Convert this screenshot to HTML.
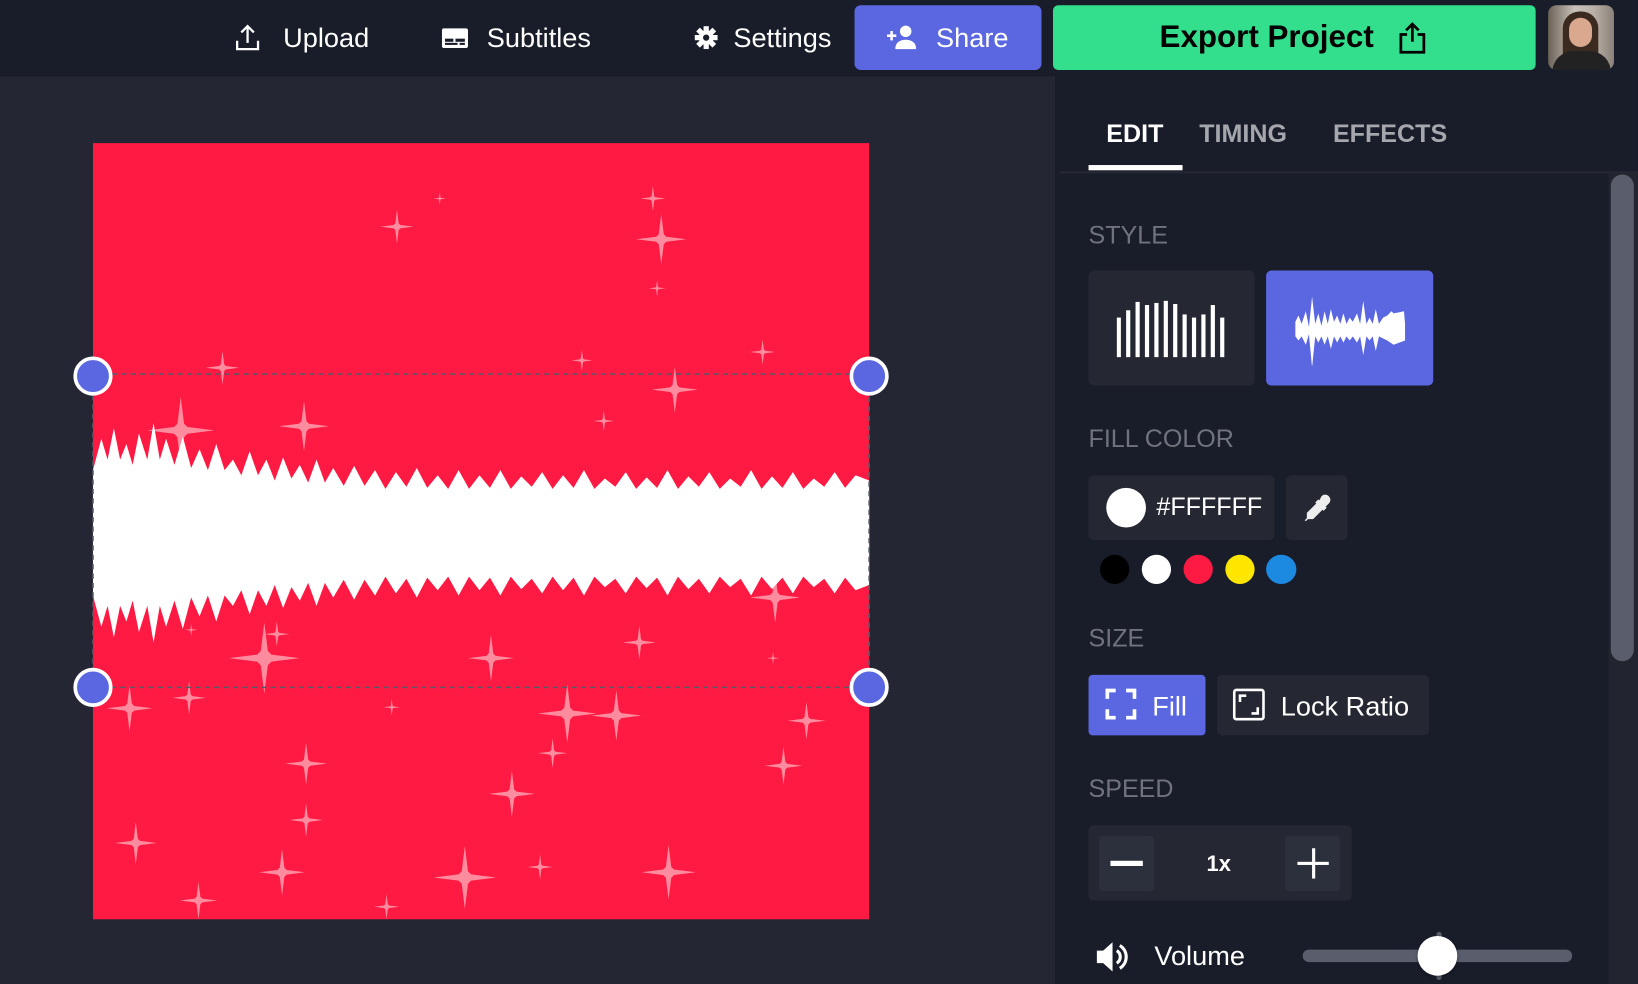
<!DOCTYPE html>
<html><head><meta charset="utf-8"><style>
html,body{margin:0;padding:0;width:1638px;height:984px;overflow:hidden;background:#191d2a;}
#w{position:absolute;left:0;top:0;width:1568px;height:942px;transform:scale(1.04464);transform-origin:0 0;font-family:"Liberation Sans",sans-serif;color:#fff;}
.a{position:absolute;}
.nav{font-size:26px;color:#fff;top:21px;}
.lbl{font-size:24px;color:#70737e;}
.box{background:#252733;border-radius:5px;}
</style></head><body><div id="w">
<div class="a" style="left:0;top:0;width:1568px;height:73px;background:#191d2a"></div>
<div class="a" style="left:0;top:73px;width:1010px;height:869px;background:#242633"></div>
<div class="a" style="left:1010px;top:73px;width:558px;height:869px;background:#191d2a"></div>

<!-- nav -->
<svg class="a" style="left:224px;top:22px" width="26" height="28" viewBox="0 0 26 28" fill="none" stroke="#fff" stroke-width="2.2"><path d="M13 19V3M7 9l6-6 6 6M3 17v8h20v-8"/></svg>
<div class="a nav" style="left:271px">Upload</div>
<svg class="a" style="left:423px;top:27px" width="25" height="19" viewBox="0 0 25 19"><rect x="0" y="0" width="25" height="19" rx="2" fill="#fff"/><rect x="3" y="10" width="8" height="3" fill="#191d2a"/><rect x="13" y="10" width="9" height="3" fill="#191d2a"/><rect x="3" y="14" width="12" height="2" fill="#191d2a"/><rect x="17" y="14" width="5" height="2" fill="#191d2a"/></svg>
<div class="a nav" style="left:466px">Subtitles</div>
<svg class="a" style="left:665px;top:25px" width="22" height="22" viewBox="-11 -11 22 22"><g fill="#fff"><circle r="7"/><rect x="-2.5" y="-11" width="5" height="22"/><rect x="-2.5" y="-11" width="5" height="22" transform="rotate(45)"/><rect x="-2.5" y="-11" width="5" height="22" transform="rotate(90)"/><rect x="-2.5" y="-11" width="5" height="22" transform="rotate(135)"/></g><circle r="3" fill="#191d2a"/></svg>
<div class="a nav" style="left:702px">Settings</div>
<div class="a" style="left:818px;top:5px;width:179px;height:62px;background:#5b67e1;border-radius:6px"></div>
<svg class="a" style="left:849px;top:24px" width="30" height="24" viewBox="0 0 30 24" fill="#fff"><circle cx="18" cy="6" r="5.5"/><path d="M8 23c0-6 4-9 10-9s10 3 10 9z"/><rect x="0" y="9" width="9" height="2.4"/><rect x="3.3" y="5.7" width="2.4" height="9"/></svg>
<div class="a nav" style="left:896px">Share</div>
<div class="a" style="left:1008px;top:5px;width:462px;height:62px;background:#33df8c;border-radius:5px"></div>
<div class="a" style="left:1110px;top:19px;font-size:30px;font-weight:bold;color:#000">Export Project</div>
<svg class="a" style="left:1338px;top:20px" width="28" height="32" viewBox="0 0 28 32" fill="none" stroke="#000" stroke-width="2.6"><path d="M14 20V3M8 9l6-6 6 6M9 13H3v17h22V13h-6"/></svg>
<div class="a" style="left:1482px;top:5px;width:63px;height:62px;border-radius:8px;background:linear-gradient(90deg,#6b6258,#c9c2b8 40%,#b8b0a6 70%,#8a8178);overflow:hidden">
<div class="a" style="left:14px;top:6px;width:34px;height:60px;border-radius:16px 16px 4px 4px;background:#3b2a20"></div>
<div class="a" style="left:20px;top:12px;width:22px;height:28px;border-radius:11px;background:#d9a88e"></div>
<div class="a" style="left:4px;top:44px;width:56px;height:30px;border-radius:20px 20px 0 0;background:#222"></div>
</div>

<!-- canvas -->
<svg class="a" style="left:0;top:0" width="1010" height="942">
<defs><path id="st" d="M0,-1 L0.1,-0.2 L0.2,-0.1 L1,0 L0.2,0.1 L0.1,0.2 L0,1 L-0.1,0.2 L-0.2,0.1 L-1,0 L-0.2,-0.1 L-0.1,-0.2Z" fill="#ff8c9e"/>
<polygon id="wv" fill="#fff" points="89,450 97,420 103,440 109,410 115,440 121,425 127,445 133,415 141,440 147,405 153,440 159,420 167,445 175,418 183,448 191,430 199,450 207,425 215,450 223,440 231,455 239,432 247,455 255,440 263,460 271,438 279,458 287,445 295,462 303,440 311,462 319,448 329,465 339,446 349,465 359,450 369,468 379,452 389,466 399,448 409,467 419,455 429,468 439,450 449,468 459,455 469,467 479,450 489,468 499,456 509,466 519,452 529,468 539,455 549,467 559,450 569,468 579,458 589,466 599,452 609,468 619,457 629,467 639,450 649,468 659,456 669,466 679,452 689,468 699,458 709,466 719,450 729,468 739,456 749,467 759,452 769,468 779,458 789,466 799,452 809,467 819,455 832,460 832,512 89,512"/></defs>
<rect x="89" y="137" width="743" height="743" fill="#ff1a44"/>
<g>
<use href="#st" transform="translate(380,217) scale(16)"/><use href="#st" transform="translate(633,229) scale(24)"/><use href="#st" transform="translate(625,190) scale(12)"/><use href="#st" transform="translate(629,276) scale(8)"/><use href="#st" transform="translate(421,190) scale(6)"/><use href="#st" transform="translate(213,352) scale(16)"/><use href="#st" transform="translate(173,412) scale(32)"/><use href="#st" transform="translate(291,408) scale(24)"/><use href="#st" transform="translate(646,373) scale(22)"/><use href="#st" transform="translate(557,345) scale(10)"/><use href="#st" transform="translate(730,337) scale(12)"/><use href="#st" transform="translate(578,403) scale(10)"/><use href="#st" transform="translate(253,630) scale(34)"/><use href="#st" transform="translate(265,607) scale(12)"/><use href="#st" transform="translate(470,630) scale(22)"/><use href="#st" transform="translate(543,683) scale(28)"/><use href="#st" transform="translate(590,685) scale(24)"/><use href="#st" transform="translate(490,760) scale(22)"/><use href="#st" transform="translate(293,731) scale(20)"/><use href="#st" transform="translate(293,785) scale(16)"/><use href="#st" transform="translate(130,807) scale(20)"/><use href="#st" transform="translate(270,835) scale(22)"/><use href="#st" transform="translate(445,840) scale(30)"/><use href="#st" transform="translate(640,835) scale(26)"/><use href="#st" transform="translate(517,830) scale(12)"/><use href="#st" transform="translate(190,862) scale(18)"/><use href="#st" transform="translate(370,868) scale(12)"/><use href="#st" transform="translate(772,690) scale(18)"/><use href="#st" transform="translate(750,733) scale(18)"/><use href="#st" transform="translate(742,572) scale(24)"/><use href="#st" transform="translate(612,615) scale(16)"/><use href="#st" transform="translate(124,678) scale(22)"/><use href="#st" transform="translate(181,668) scale(16)"/><use href="#st" transform="translate(529,721) scale(14)"/><use href="#st" transform="translate(183,603) scale(6)"/><use href="#st" transform="translate(375,677) scale(8)"/><use href="#st" transform="translate(740,630) scale(6)"/>
</g>
<use href="#wv"/><use href="#wv" transform="translate(0,1020) scale(1,-1)"/>
<rect x="89" y="470" width="743" height="80" fill="#fff"/>
<rect x="89" y="358" width="743" height="300" fill="none" stroke="#555a66" stroke-width="1.5" stroke-dasharray="5,4"/>
<g fill="#5b67e1" stroke="#fff" stroke-width="3.5"><circle cx="89" cy="360" r="17"/><circle cx="832" cy="360" r="17"/><circle cx="89" cy="658" r="17"/><circle cx="832" cy="658" r="17"/></g>
</svg>

<!-- panel -->
<div class="a" style="left:1059px;top:115px;font-size:24px;font-weight:bold;color:#fff">EDIT</div>
<div class="a" style="left:1148px;top:115px;font-size:24px;font-weight:bold;color:#a5a7ad">TIMING</div>
<div class="a" style="left:1276px;top:115px;font-size:24px;font-weight:bold;color:#a5a7ad">EFFECTS</div>
<div class="a" style="left:1042px;top:158px;width:90px;height:5px;background:#fff"></div>
<div class="a" style="left:1014px;top:164px;width:554px;height:2px;background:#252733"></div>
<div class="a" style="left:1540px;top:166px;width:28px;height:776px;background:#22252f"></div>
<div class="a" style="left:1542px;top:167px;width:22px;height:466px;background:#5a5d6b;border-radius:11px"></div>

<div class="a lbl" style="left:1042px;top:212px">STYLE</div>
<div class="a box" style="left:1042px;top:259px;width:159px;height:110px"></div>
<svg class="a" style="left:1069px;top:286px" width="108" height="56" fill="#fff"><rect x="0" y="18" width="4" height="38"/><rect x="9" y="11" width="4" height="45"/><rect x="18" y="3" width="4" height="53"/><rect x="27" y="6" width="4" height="50"/><rect x="36" y="4" width="4" height="52"/><rect x="45" y="2" width="4" height="54"/><rect x="54" y="5" width="4" height="51"/><rect x="63" y="15" width="4" height="41"/><rect x="72" y="18" width="4" height="38"/><rect x="81" y="15" width="4" height="41"/><rect x="90" y="6" width="4" height="50"/><rect x="99" y="18" width="4" height="38"/></svg>
<div class="a" style="left:1212px;top:259px;width:160px;height:110px;background:#5b67e1;border-radius:5px"></div>
<svg class="a" style="left:1238px;top:280px" width="110" height="70" fill="#fff"><polygon points="2,28 5,22 8,30 12,18 15,33 18,4 21,30 24,20 27,32 30,18 33,30 36,16 39,28 42,22 45,30 48,20 51,30 54,24 57,28 61,20 64,30 67,8 70,30 73,24 76,30 79,16 82,30 86,24 90,22 94,18 96,20 106,18 107,30 107,46 96,50 90,46 86,44 82,42 79,56 76,42 73,46 70,42 67,60 64,42 61,48 57,42 54,46 51,42 48,48 45,42 42,48 39,42 36,54 33,42 30,50 27,42 24,48 21,42 18,72 15,40 12,50 8,42 5,46 2,42"/></svg>

<div class="a lbl" style="left:1042px;top:407px">FILL COLOR</div>
<div class="a box" style="left:1042px;top:455px;width:178px;height:62px"></div>
<div class="a" style="left:1059px;top:467px;width:38px;height:38px;border-radius:50%;background:#fff"></div>
<div class="a" style="left:1107px;top:472px;font-size:24px">#FFFFFF</div>
<div class="a box" style="left:1231px;top:455px;width:59px;height:62px"></div>
<svg class="a" style="left:1247px;top:472px" width="28" height="28" viewBox="0 0 28 28" fill="#eee"><path d="M18 3c2-2 5-2 7 0s2 5 0 7l-3 3 1 1-3 3-1-1-9 9H5l-2 2-1-1 2-2v-5l9-9-1-1 3-3 1 1z"/></svg>
<div class="a" style="left:1053px;top:531px;width:28px;height:28px;border-radius:50%;background:#000"></div>
<div class="a" style="left:1093px;top:531px;width:28px;height:28px;border-radius:50%;background:#fff"></div>
<div class="a" style="left:1133px;top:531px;width:28px;height:28px;border-radius:50%;background:#ff1a44"></div>
<div class="a" style="left:1173px;top:531px;width:28px;height:28px;border-radius:50%;background:#ffe600"></div>
<div class="a" style="left:1212px;top:531px;width:29px;height:28px;border-radius:50%;background:#1d8ae2"></div>

<div class="a lbl" style="left:1042px;top:598px">SIZE</div>
<div class="a" style="left:1042px;top:646px;width:112px;height:58px;background:#5b67e1;border-radius:4px"></div>
<svg class="a" style="left:1058px;top:659px" width="30" height="30" fill="none" stroke="#fff" stroke-width="3.5"><path d="M2 10V2h8M20 2h8v8M28 20v8h-8M10 28H2v-8"/></svg>
<div class="a" style="left:1103px;top:661px;font-size:26px">Fill</div>
<div class="a box" style="left:1165px;top:646px;width:203px;height:58px"></div>
<svg class="a" style="left:1180px;top:659px" width="31" height="31" fill="none" stroke="#fff" stroke-width="2.5"><rect x="1.5" y="1.5" width="28" height="28" rx="2"/><path d="M7 13V7h6M24 18v6h-6"/></svg>
<div class="a" style="left:1226px;top:661px;font-size:26px">Lock Ratio</div>

<div class="a lbl" style="left:1042px;top:742px">SPEED</div>
<div class="a box" style="left:1042px;top:790px;width:252px;height:72px"></div>
<div class="a" style="left:1052px;top:800px;width:53px;height:53px;background:#2c2f3c;border-radius:4px"></div>
<div class="a" style="left:1063px;top:824px;width:31px;height:5px;background:#fff"></div>
<div class="a" style="left:1155px;top:816px;font-size:21px;font-weight:bold">1x</div>
<div class="a" style="left:1230px;top:800px;width:53px;height:53px;background:#2c2f3c;border-radius:4px"></div>
<div class="a" style="left:1242px;top:825px;width:30px;height:3px;background:#fff"></div>
<div class="a" style="left:1255.5px;top:812px;width:3px;height:29px;background:#fff"></div>

<svg class="a" style="left:1049px;top:900px" width="36" height="32" viewBox="0 0 36 32" fill="#fff"><path d="M1 10h6l9-8v28l-9-8H1z"/><path d="M20 10a7 7 0 0 1 0 12" fill="none" stroke="#fff" stroke-width="3"/><path d="M23 5a13 13 0 0 1 0 22" fill="none" stroke="#fff" stroke-width="3"/></svg>
<div class="a" style="left:1105px;top:900px;font-size:26px">Volume</div>
<div class="a" style="left:1247px;top:909px;width:258px;height:12px;background:#5a5d6b;border-radius:6px"></div>
<div class="a" style="left:1375px;top:892px;width:5px;height:46px;background:#5a5d6b;border-radius:3px"></div>
<div class="a" style="left:1357px;top:896px;width:38px;height:38px;border-radius:50%;background:#fff;box-shadow:0 1px 3px rgba(0,0,0,.4)"></div>
</div></body></html>
